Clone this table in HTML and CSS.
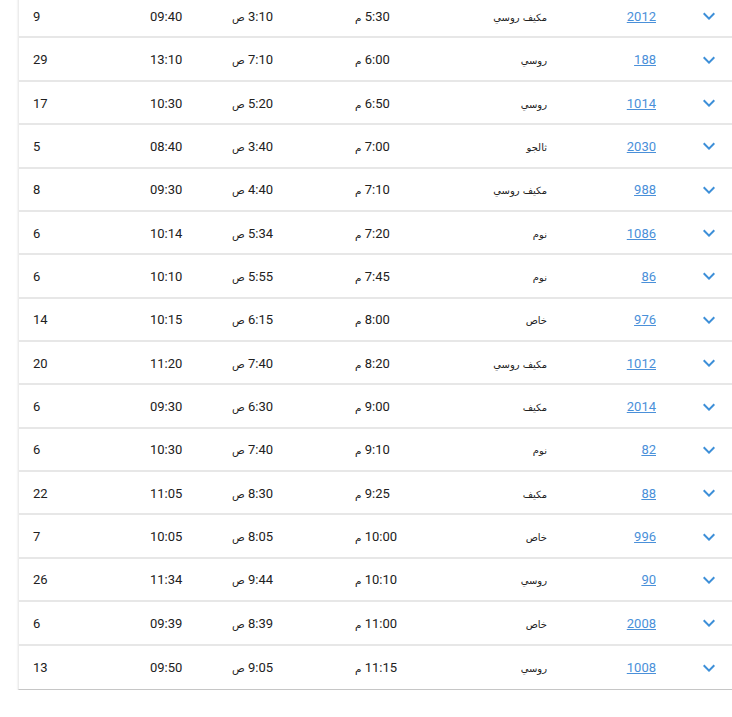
FILE: index.html
```html
<!DOCTYPE html>
<html lang="ar">
<head>
<meta charset="utf-8">
<link rel="stylesheet" href="styles.css">
</head>
<body>
<div class="card">
  <div class="row"><span class="c-num">9</span><span class="c-dur">09:40</span><span class="c-t"><span class="rtl">3:10 <span class="ar">ص</span></span></span><span class="c-t"><span class="rtl">5:30 <span class="ar">م</span></span></span><span class="c-type">مكيف روسي</span><span class="c-link"><a href="#">2012</a></span><span class="c-ico"><svg viewBox="0 0 24 24"><path d="M7.41 8.59L12 13.17l4.59-4.58L18 10l-6 6-6-6 1.41-1.41z"/></svg></span></div>
  <div class="row"><span class="c-num">29</span><span class="c-dur">13:10</span><span class="c-t"><span class="rtl">7:10 <span class="ar">ص</span></span></span><span class="c-t"><span class="rtl">6:00 <span class="ar">م</span></span></span><span class="c-type">روسي</span><span class="c-link"><a href="#">188</a></span><span class="c-ico"><svg viewBox="0 0 24 24"><path d="M7.41 8.59L12 13.17l4.59-4.58L18 10l-6 6-6-6 1.41-1.41z"/></svg></span></div>
  <div class="row"><span class="c-num">17</span><span class="c-dur">10:30</span><span class="c-t"><span class="rtl">5:20 <span class="ar">ص</span></span></span><span class="c-t"><span class="rtl">6:50 <span class="ar">م</span></span></span><span class="c-type">روسي</span><span class="c-link"><a href="#">1014</a></span><span class="c-ico"><svg viewBox="0 0 24 24"><path d="M7.41 8.59L12 13.17l4.59-4.58L18 10l-6 6-6-6 1.41-1.41z"/></svg></span></div>
  <div class="row"><span class="c-num">5</span><span class="c-dur">08:40</span><span class="c-t"><span class="rtl">3:40 <span class="ar">ص</span></span></span><span class="c-t"><span class="rtl">7:00 <span class="ar">م</span></span></span><span class="c-type">ثالجو</span><span class="c-link"><a href="#">2030</a></span><span class="c-ico"><svg viewBox="0 0 24 24"><path d="M7.41 8.59L12 13.17l4.59-4.58L18 10l-6 6-6-6 1.41-1.41z"/></svg></span></div>
  <div class="row"><span class="c-num">8</span><span class="c-dur">09:30</span><span class="c-t"><span class="rtl">4:40 <span class="ar">ص</span></span></span><span class="c-t"><span class="rtl">7:10 <span class="ar">م</span></span></span><span class="c-type">مكيف روسي</span><span class="c-link"><a href="#">988</a></span><span class="c-ico"><svg viewBox="0 0 24 24"><path d="M7.41 8.59L12 13.17l4.59-4.58L18 10l-6 6-6-6 1.41-1.41z"/></svg></span></div>
  <div class="row"><span class="c-num">6</span><span class="c-dur">10:14</span><span class="c-t"><span class="rtl">5:34 <span class="ar">ص</span></span></span><span class="c-t"><span class="rtl">7:20 <span class="ar">م</span></span></span><span class="c-type">نوم</span><span class="c-link"><a href="#">1086</a></span><span class="c-ico"><svg viewBox="0 0 24 24"><path d="M7.41 8.59L12 13.17l4.59-4.58L18 10l-6 6-6-6 1.41-1.41z"/></svg></span></div>
  <div class="row"><span class="c-num">6</span><span class="c-dur">10:10</span><span class="c-t"><span class="rtl">5:55 <span class="ar">ص</span></span></span><span class="c-t"><span class="rtl">7:45 <span class="ar">م</span></span></span><span class="c-type">نوم</span><span class="c-link"><a href="#">86</a></span><span class="c-ico"><svg viewBox="0 0 24 24"><path d="M7.41 8.59L12 13.17l4.59-4.58L18 10l-6 6-6-6 1.41-1.41z"/></svg></span></div>
  <div class="row"><span class="c-num">14</span><span class="c-dur">10:15</span><span class="c-t"><span class="rtl">6:15 <span class="ar">ص</span></span></span><span class="c-t"><span class="rtl">8:00 <span class="ar">م</span></span></span><span class="c-type">خاص</span><span class="c-link"><a href="#">976</a></span><span class="c-ico"><svg viewBox="0 0 24 24"><path d="M7.41 8.59L12 13.17l4.59-4.58L18 10l-6 6-6-6 1.41-1.41z"/></svg></span></div>
  <div class="row"><span class="c-num">20</span><span class="c-dur">11:20</span><span class="c-t"><span class="rtl">7:40 <span class="ar">ص</span></span></span><span class="c-t"><span class="rtl">8:20 <span class="ar">م</span></span></span><span class="c-type">مكيف روسي</span><span class="c-link"><a href="#">1012</a></span><span class="c-ico"><svg viewBox="0 0 24 24"><path d="M7.41 8.59L12 13.17l4.59-4.58L18 10l-6 6-6-6 1.41-1.41z"/></svg></span></div>
  <div class="row"><span class="c-num">6</span><span class="c-dur">09:30</span><span class="c-t"><span class="rtl">6:30 <span class="ar">ص</span></span></span><span class="c-t"><span class="rtl">9:00 <span class="ar">م</span></span></span><span class="c-type">مكيف</span><span class="c-link"><a href="#">2014</a></span><span class="c-ico"><svg viewBox="0 0 24 24"><path d="M7.41 8.59L12 13.17l4.59-4.58L18 10l-6 6-6-6 1.41-1.41z"/></svg></span></div>
  <div class="row"><span class="c-num">6</span><span class="c-dur">10:30</span><span class="c-t"><span class="rtl">7:40 <span class="ar">ص</span></span></span><span class="c-t"><span class="rtl">9:10 <span class="ar">م</span></span></span><span class="c-type">نوم</span><span class="c-link"><a href="#">82</a></span><span class="c-ico"><svg viewBox="0 0 24 24"><path d="M7.41 8.59L12 13.17l4.59-4.58L18 10l-6 6-6-6 1.41-1.41z"/></svg></span></div>
  <div class="row"><span class="c-num">22</span><span class="c-dur">11:05</span><span class="c-t"><span class="rtl">8:30 <span class="ar">ص</span></span></span><span class="c-t"><span class="rtl">9:25 <span class="ar">م</span></span></span><span class="c-type">مكيف</span><span class="c-link"><a href="#">88</a></span><span class="c-ico"><svg viewBox="0 0 24 24"><path d="M7.41 8.59L12 13.17l4.59-4.58L18 10l-6 6-6-6 1.41-1.41z"/></svg></span></div>
  <div class="row"><span class="c-num">7</span><span class="c-dur">10:05</span><span class="c-t"><span class="rtl">8:05 <span class="ar">ص</span></span></span><span class="c-t"><span class="rtl">10:00 <span class="ar">م</span></span></span><span class="c-type">خاص</span><span class="c-link"><a href="#">996</a></span><span class="c-ico"><svg viewBox="0 0 24 24"><path d="M7.41 8.59L12 13.17l4.59-4.58L18 10l-6 6-6-6 1.41-1.41z"/></svg></span></div>
  <div class="row"><span class="c-num">26</span><span class="c-dur">11:34</span><span class="c-t"><span class="rtl">9:44 <span class="ar">ص</span></span></span><span class="c-t"><span class="rtl">10:10 <span class="ar">م</span></span></span><span class="c-type">روسي</span><span class="c-link"><a href="#">90</a></span><span class="c-ico"><svg viewBox="0 0 24 24"><path d="M7.41 8.59L12 13.17l4.59-4.58L18 10l-6 6-6-6 1.41-1.41z"/></svg></span></div>
  <div class="row"><span class="c-num">6</span><span class="c-dur">09:39</span><span class="c-t"><span class="rtl">8:39 <span class="ar">ص</span></span></span><span class="c-t"><span class="rtl">11:00 <span class="ar">م</span></span></span><span class="c-type">خاص</span><span class="c-link"><a href="#">2008</a></span><span class="c-ico"><svg viewBox="0 0 24 24"><path d="M7.41 8.59L12 13.17l4.59-4.58L18 10l-6 6-6-6 1.41-1.41z"/></svg></span></div>
  <div class="row"><span class="c-num">13</span><span class="c-dur">09:50</span><span class="c-t"><span class="rtl">9:05 <span class="ar">ص</span></span></span><span class="c-t"><span class="rtl">11:15 <span class="ar">م</span></span></span><span class="c-type">روسي</span><span class="c-link"><a href="#">1008</a></span><span class="c-ico"><svg viewBox="0 0 24 24"><path d="M7.41 8.59L12 13.17l4.59-4.58L18 10l-6 6-6-6 1.41-1.41z"/></svg></span></div>
</div>
</body>
</html>
```

FILE: styles.css
```css
html {
  overflow: hidden;
  background: #ffffff;
}

body {
  margin: 0;
  padding: 0;
  font-family: Roboto, "DejaVu Sans", sans-serif;
  font-size: 13px;
  color: #212121;
}

.card {
  margin: -4.9px -20px 0 18px;
  background: #ffffff;
  border-left: 1px solid #ececec;
  border-bottom: 1px solid #c6c6c6;
  box-shadow: 0 1px 2px rgba(0, 0, 0, 0.12);
}

.row {
  display: grid;
  grid-template-columns: 117px 82px 123px 120px 72px 109px 65px 1fr;
  align-items: center;
  height: 43.37px;
  box-sizing: border-box;
  padding-left: 14px;
  padding-top: 1px;
  border-bottom: 2px solid #e7e7e7;
}

.row:last-child {
  border-bottom: none;
}

.c-num, .c-dur, .c-t {
  text-align: left;
}

.rtl {
  display: inline-block;
  direction: rtl;
  unicode-bidi: isolate;
}

.ar {
  font-family: "DejaVu Sans", sans-serif;
  font-size: 10.5px;
}

.c-type {
  text-align: right;
  font-family: "DejaVu Sans", sans-serif;
  font-size: 10px;
  padding-top: 2px;
  direction: rtl;
}

.c-link {
  text-align: right;
}

.c-link a {
  color: #4a90d9;
  text-decoration: underline;
}

.c-ico {
  display: flex;
  align-items: center;
  justify-content: flex-end;
}

.c-ico svg {
  width: 24px;
  height: 24px;
  fill: #3d8fd8;
}
```
